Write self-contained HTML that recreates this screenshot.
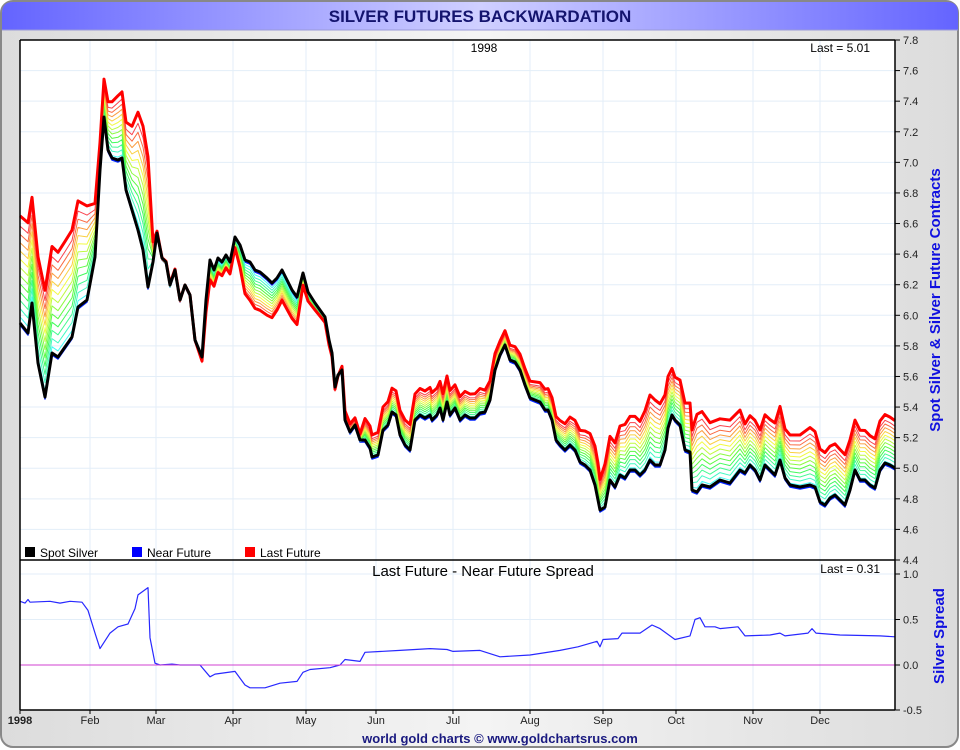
<!DOCTYPE html>
<html><head><meta charset="utf-8"><style>
body{margin:0;background:#fff;font-family:"Liberation Sans",sans-serif}
#w{position:relative;width:960px;height:750px;overflow:hidden}
</style></head><body><div id="w">
<svg id="s" width="960" height="750" xmlns="http://www.w3.org/2000/svg" font-family="Liberation Sans, sans-serif">
<defs>
<linearGradient id="tb" x1="0" x2="1"><stop offset="0" stop-color="#6464ff"/><stop offset="0.5" stop-color="#d0d0ff"/><stop offset="1" stop-color="#6464ff"/></linearGradient>
<linearGradient id="bg" x1="0" x2="1"><stop offset="0" stop-color="#dcdcdc"/><stop offset="0.5" stop-color="#f4f4f4"/><stop offset="1" stop-color="#dcdcdc"/></linearGradient>
</defs>
<rect x="1" y="1" width="957" height="746" rx="12" fill="url(#bg)" stroke="#888" stroke-width="2"/>
<path d="M2 30 V13 Q2 2 13 2 H947 Q958 2 958 13 V30 Z" fill="url(#tb)"/>
<line x1="2" y1="30" x2="958" y2="30" stroke="#9a9ad8"/>
<text x="480" y="22" text-anchor="middle" font-size="17" font-weight="bold" fill="#14146e">SILVER FUTURES BACKWARDATION</text>
<rect x="20" y="40" width="875" height="670" fill="#fff"/>
<g id="grid" stroke="#e3eef8" stroke-width="1"></g>
<g id="lines" fill="none" stroke-linejoin="round"></g>
<line x1="20" y1="665" x2="895" y2="665" stroke="#d040d0" stroke-width="1"/>
<g stroke="#000" stroke-width="1.5" fill="none">
<line x1="20" y1="40" x2="895" y2="40"/><line x1="20" y1="560" x2="895" y2="560"/><line x1="20" y1="710" x2="895" y2="710"/>
<line x1="20" y1="40" x2="20" y2="710"/><line x1="895" y1="40" x2="895" y2="710"/>
</g>
<g id="ax" font-size="11" fill="#222"></g>
<text x="484" y="52" text-anchor="middle" font-size="12">1998</text>
<text x="870" y="52" text-anchor="end" font-size="12">Last = 5.01</text>
<text x="483" y="576" text-anchor="middle" font-size="15">Last Future - Near Future Spread</text>
<text x="880" y="573" text-anchor="end" font-size="12">Last = 0.31</text>
<rect x="25" y="547" width="10" height="10" fill="#000"/><text x="40" y="557" font-size="12">Spot Silver</text>
<rect x="132" y="547" width="10" height="10" fill="#0000ff"/><text x="147" y="557" font-size="12">Near Future</text>
<rect x="245" y="547" width="10" height="10" fill="#ff0000"/><text x="260" y="557" font-size="12">Last Future</text>
<text transform="translate(940,300) rotate(-90)" text-anchor="middle" font-size="15" font-weight="bold" fill="#1010e0">Spot Silver &amp; Silver Future Contracts</text>
<text transform="translate(944,636) rotate(-90)" text-anchor="middle" font-size="15" font-weight="bold" fill="#1010e0">Silver Spread</text>
<text x="500" y="743" text-anchor="middle" font-size="13" font-weight="bold" fill="#1a1a80">world gold charts © www.goldchartsrus.com</text>
</svg>
<script>
var NS="http://www.w3.org/2000/svg";
function el(p,t,a,txt){var e=document.createElementNS(NS,t);for(var k in a)e.setAttribute(k,a[k]);if(txt)e.textContent=txt;document.getElementById(p).appendChild(e);return e;}
var months=[["1998",20],["Feb",90],["Mar",156],["Apr",233],["May",306],["Jun",376],["Jul",453],["Aug",530],["Sep",603],["Oct",676],["Nov",753],["Dec",820]];
months.forEach(function(m,i){if(i>0)el("grid","line",{x1:m[1],y1:40,x2:m[1],y2:710});
el("ax","text",{x:m[1],y:724,"text-anchor":"middle","font-weight":i==0?"bold":"normal"},m[0]);
el("ax","line",{x1:m[1],y1:710,x2:m[1],y2:714,stroke:"#000"});});
for(var v=4.4;v<=7.81;v+=0.2){var y=40+(7.8-v)*520/3.4;el("grid","line",{x1:20,y1:y,x2:895,y2:y});
el("ax","line",{x1:895,y1:y,x2:900,y2:y,stroke:"#000"});el("ax","text",{x:903,y:y+4},v.toFixed(1));}
[[1,574],[0.5,619.5],[0,665],[-0.5,710]].forEach(function(a){el("grid","line",{x1:20,y1:a[1],x2:895,y2:a[1]});
el("ax","line",{x1:895,y1:a[1],x2:900,y2:a[1],stroke:"#000"});el("ax","text",{x:903,y:a[1]+4},a[0].toFixed(1));});
var B=[20,323,28,333,32,303,38,363,45,397,52,353,58,357,65,347,72,337,78,307,87,300,95,257,100,170,104,117,108,150,112,158,118,160,122,158,126,190,132,210,138,230,143,250,148,287,153,262,157,233,162,258,166,262,170,285,175,270,180,300,185,285,190,295,195,340,202,357,206,300,210,260,214,270,218,258,222,262,226,255,230,262,235,237,240,245,245,260,250,262,255,270,260,272,267,278,272,283,277,278,282,270,288,282,292,290,297,297,303,273,308,292,315,303,320,310,325,317,329,340,332,353,335,387,338,375,342,370,345,420,350,432,355,425,360,440,365,440,370,448,372,457,378,455,383,430,388,425,392,412,396,415,400,435,405,445,410,450,415,420,420,415,425,418,430,415,432,420,437,415,440,408,443,420,447,402,450,415,455,408,460,420,465,415,470,418,475,418,480,413,485,412,490,400,495,370,500,355,505,345,510,360,515,362,520,370,525,385,530,398,535,400,540,402,545,410,548,410,552,420,556,440,560,445,565,450,570,445,575,450,580,462,585,465,590,470,595,485,598,500,600,510,605,507,610,480,615,487,620,475,625,478,630,470,635,470,640,475,645,470,650,460,655,465,660,465,665,450,668,428,672,415,675,420,680,425,685,450,690,452,692,490,697,492,702,485,710,487,720,480,730,483,740,470,745,473,750,465,755,470,760,480,765,465,770,470,775,475,780,460,785,478,790,485,800,487,810,485,815,487,820,502,825,505,830,498,835,495,840,500,845,505,850,490,855,470,860,480,865,480,870,485,875,488,880,470,885,463,890,465,895,468];
var S=[20,0.7,25,0.68,28,0.72,30,0.69,50,0.7,60,0.68,70,0.7,82,0.69,88,0.6,95,0.35,100,0.18,110,0.35,118,0.42,128,0.45,135,0.62,138,0.77,148,0.85,150,0.3,155,0.02,160,0,172,0.01,180,0,200,0,210,-0.13,215,-0.1,235,-0.07,245,-0.22,250,-0.25,265,-0.25,280,-0.2,297,-0.18,303,-0.08,310,-0.05,330,-0.03,340,0,345,0.06,360,0.04,365,0.14,400,0.16,430,0.18,447,0.17,453,0.15,480,0.16,500,0.09,530,0.11,560,0.16,578,0.2,597,0.26,600,0.2,603,0.28,618,0.29,622,0.35,640,0.35,652,0.44,660,0.4,675,0.28,690,0.32,695,0.5,700,0.52,705,0.42,715,0.42,720,0.4,738,0.42,745,0.32,770,0.33,780,0.35,785,0.32,808,0.35,812,0.4,816,0.35,840,0.33,880,0.32,895,0.31];
function sp(x){for(var i=0;i<S.length-2;i+=2){if(x<=S[i+2]){var t=(x-S[i])/(S[i+2]-S[i]);return S[i+1]+t*(S[i+3]-S[i+1]);}}return S[S.length-1];}
function path(f){var d="";for(var i=0;i<B.length;i+=2){d+=(i?"L":"M")+B[i]+" "+f(B[i],B[i+1]).toFixed(1);}return d;}
var N=12;
el("lines","path",{d:path(function(x,y){return y+2}),stroke:"#0022ff","stroke-width":1.5});
for(var k=1;k<=N;k++){var t=k/(N+1);var h=(195-t*215+360)%360;
el("lines","path",{d:path(function(x,y){return y+2-sp(x)*153*t;}),stroke:"hsl("+h+",95%,62%)","stroke-width":1});}
el("lines","path",{d:path(function(x,y){return y-sp(x)*153;}),stroke:"#ff0000","stroke-width":3});
el("lines","path",{d:path(function(x,y){return y;}),stroke:"#000","stroke-width":3});
var d="";for(var i=0;i<S.length;i+=2){d+=(i?"L":"M")+S[i]+" "+(665-S[i+1]*91).toFixed(1);}
el("lines","path",{d:d,stroke:"#2828ff","stroke-width":1.2});
</script>
</div></body></html>
